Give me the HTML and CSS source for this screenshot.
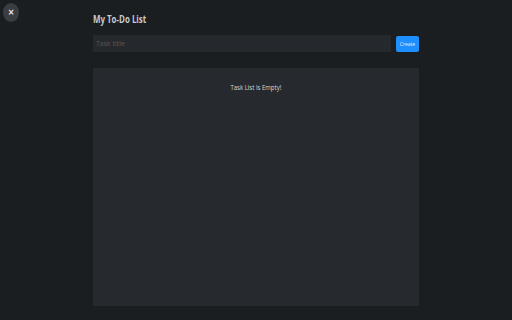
FILE: index.html
```html
<html>
<head>
	<link rel="stylesheet" href="styles.css">
</head>
<body>
	<button class="close">&times;</button>

	<div class="app">
		<h1><span>My To-Do List</span></h1>

		<form class="new-task">
			<input type="text" class="title" placeholder="Task title">
			<button type="submit" class="create">Create</button>
		</form>

		<div class="tasks">
			<p class="empty"><span>Task List Is Empty!</span></p>
		</div>
	</div>
</body>
</html>
```

FILE: styles.css
```css
body {
	margin: 0;
	background-color: #1b1e21;
	font-family: "Open Sans", "DejaVu Sans", sans-serif;
	color: #d4d5d6;
}

.close {
	position: absolute;
	left: 3px;
	top: 3px;
	width: 16px;
	height: 19px;
	border: none;
	border-radius: 50%;
	background-color: #3a3d41;
	color: #f0f0f0;
	font-size: 8px;
	font-weight: bold;
	line-height: 19px;
	padding: 0;
	font-family: "DejaVu Sans", sans-serif;
}

.app {
	width: 326px;
	margin: 0 auto;
	padding-top: 12px;
}

h1 {
	margin: 0 0 10px 0;
	font-size: 11px;
	line-height: 13px;
	font-weight: 700;
	color: #c9cacc;
}
h1 span {
	display: inline-block;
	transform: scaleX(0.72);
	transform-origin: left center;
}

.new-task {
	display: flex;
	gap: 5px;
	align-items: center;
	margin: 0 0 16px 0;
}

.title {
	flex: 1;
	height: 17px;
	border: none;
	background-color: #25282c;
	color: #ccc;
	padding: 0 3px;
	font-family: "Open Sans", sans-serif;
	font-size: 7px;
}
.title::placeholder {
	color: #55595d;
}

.create {
	width: 23px;
	height: 16px;
	border: none;
	border-radius: 2px;
	background-color: #1e8fff;
	color: #e6f1ff;
	font-family: "Open Sans", sans-serif;
	font-size: 5px;
	padding: 0;
}

.tasks {
	height: 238px;
	background-color: #26292d;
	padding-top: 13px;
	box-sizing: border-box;
}

.empty {
	margin: 0;
	text-align: center;
	font-size: 8px;
	line-height: 11px;
	color: #d8d9da;
}
.empty span {
	display: inline-block;
	transform: scaleX(0.75);
}
```
